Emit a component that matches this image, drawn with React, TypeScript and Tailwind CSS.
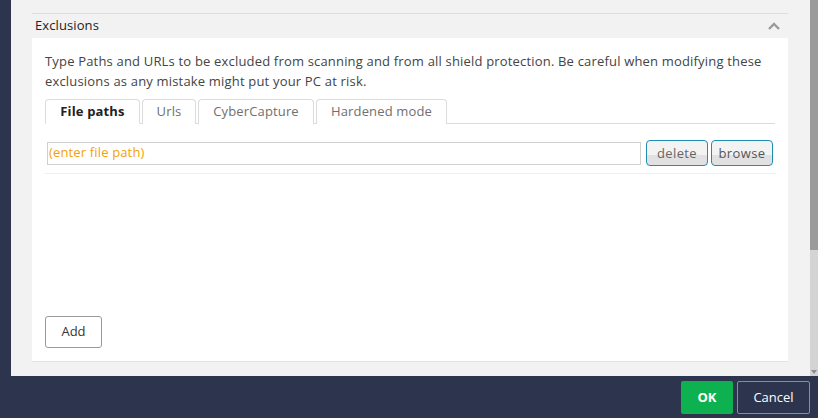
import React from "react";

const tabs = [
  { label: "File paths", w: "w-[95px]", active: true },
  { label: "Urls", w: "w-[54px]", active: false },
  { label: "CyberCapture", w: "w-[116px]", active: false },
  { label: "Hardened mode", w: "w-[131px]", active: false },
];

const ChevronUp = () => (
  <svg width="12" height="8" viewBox="0 0 12 8" className="block">
    <path d="M1 7 L6 2 L11 7" fill="none" stroke="#9a9a9a" strokeWidth="2.4" />
  </svg>
);

const App: React.FC = () => {
  return (
    <div
      className="w-[818px] h-[418px] bg-[#2d344e] flex flex-col overflow-hidden"
      style={{ fontFamily: "'Open Sans', 'Liberation Sans', sans-serif" }}
    >
      <div className="flex h-[376px]">
        <div className="w-[11px]" />

        {/* Settings panel */}
        <div className="flex-1 bg-[#f2f2f2] pl-[21px] pr-[22px] pt-[13px]">
          <div className="border-t border-[#dedede] h-[25px] flex items-center justify-between pl-[3px] pr-[8px]">
            <span className="text-[13px] text-[#222] tracking-[0.1px]">Exclusions</span>
            <ChevronUp />
          </div>

          <div className="bg-white h-[324px] border-b border-[#e2e2e2] pl-[13px] pr-[13px] pt-[13px] pb-[13px] flex flex-col">
            <p className="text-[13px] leading-[20px] text-[#444] pr-[6px] tracking-[0.18px]">
              Type Paths and URLs to be excluded from scanning and from all shield protection. Be careful when modifying these
              exclusions as any mistake might put your PC at risk.
            </p>

            {/* Tabs */}
            <div className="mt-[8px] flex gap-[2px] border-b border-[#dcdcdc] h-[25px]">
              {tabs.map((t) => (
                <div
                  key={t.label}
                  className={`${t.w} h-[25px] flex items-center justify-center rounded-t-[4px] border border-[#dcdcdc] text-[13px] tracking-[0.15px] ${
                    t.active ? "border-b-white bg-white font-bold text-[#222]" : "border-b-0 bg-white text-[#6f6f6f]"
                  }`}
                >
                  {t.label}
                </div>
              ))}
            </div>

            {/* Path row */}
            <div className="mt-[16px] flex items-center gap-[3px] pl-[3px] pb-[7px] border-b border-[#f0f0f0] -mx-[1px]">
              <div className="w-[594px] h-[23px] border border-[#d0d0d0] flex items-center px-[1px] text-[13px] text-[#f5a200] mr-[2px] tracking-[0.15px]">
                (enter file path)
              </div>
              <button className="w-[62px] h-[26px] rounded-[4px] border border-[#1f8db4] bg-[linear-gradient(#f3f3f3_0%,#f3f3f3_60%,#e1e1e1_60%,#e1e1e1_100%)] text-[13px] text-[#666] leading-none tracking-[0.4px]">
                delete
              </button>
              <button className="w-[62px] h-[26px] rounded-[4px] border border-[#1f8db4] bg-[linear-gradient(#f3f3f3_0%,#f3f3f3_60%,#e1e1e1_60%,#e1e1e1_100%)] text-[13px] text-[#555] leading-none tracking-[0.4px]">
                browse
              </button>
            </div>

            <div className="mt-auto">
              <button className="w-[57px] h-[32px] rounded-[3px] border border-[#9a9a9a] bg-white text-[13px] text-[#333]">
                Add
              </button>
            </div>
          </div>
        </div>

        {/* Scrollbar */}
        <div className="w-[8px] bg-[#d4d4d4] flex flex-col">
          <div className="h-[250px] bg-[#9b9b9b]" />
          <div className="flex-1" />
          <div className="h-[6px] flex justify-center">
            <svg width="8" height="5" viewBox="0 0 8 5">
              <path d="M1 0 L7 0 L4 4 Z" fill="#8c8c8c" />
            </svg>
          </div>
        </div>
      </div>

      {/* Footer */}
      <div className="flex-1 flex items-start justify-end gap-[4px] pr-[8px] pt-[5px]">
        <button className="w-[52px] h-[33px] rounded-[2px] bg-[#0db14f] text-white text-[13px] font-bold">
          OK
        </button>
        <button className="w-[73px] h-[33px] rounded-[2px] border border-[#8a8d98] text-white text-[13px]">
          Cancel
        </button>
      </div>
    </div>
  );
};

export default App;
